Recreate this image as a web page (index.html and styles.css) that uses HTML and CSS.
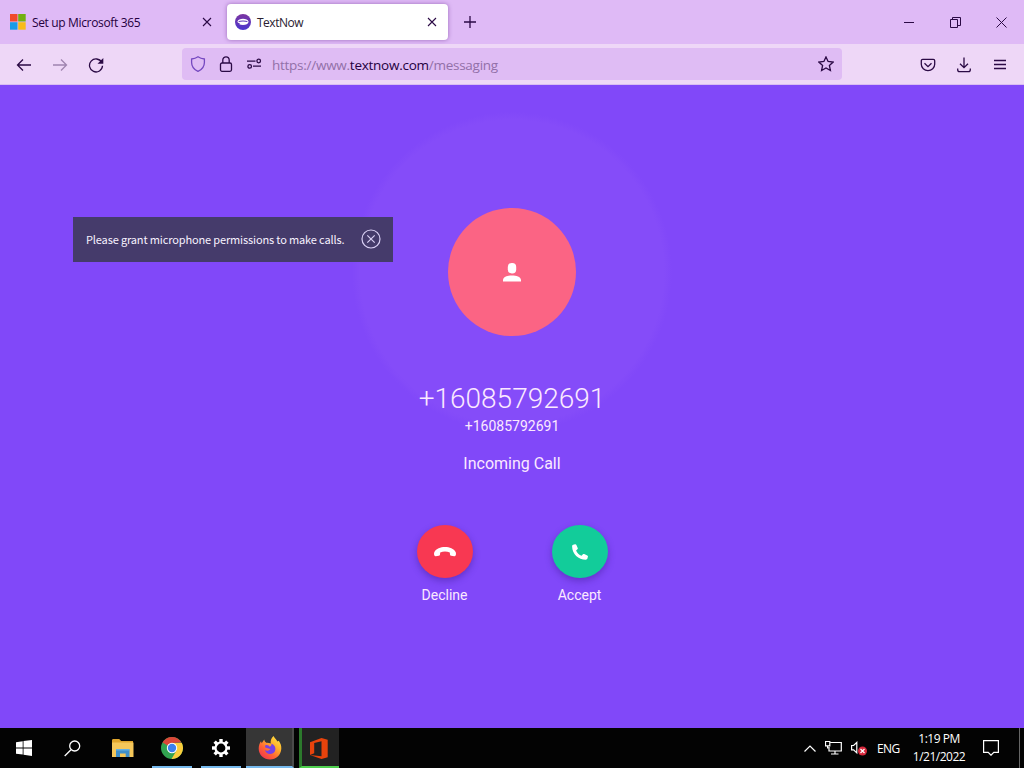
FILE: index.html
```html
<!doctype html>
<html lang="en">
<head>
    <meta charset="UTF-8">
    <meta name="viewport" content="width=device-width, initial-scale=1">
    <title>TextNow</title>
    <link rel="stylesheet" href="styles.css">
</head>
<body>
<div class="screen">
    <div class="tab-bar">
        <div class="tab">
            <svg class="favicon" width="16" height="16" viewBox="0 0 16 16">
                <path fill="#f04a2c" d="M0 0h7.500v7.500H0z"/>
                <path fill="#72b010" d="M8.200 0h7.500v7.500H8.200z"/>
                <path fill="#1a9be6" d="M0 8.200h7.500v7.500H0z"/>
                <path fill="#f8bb18" d="M8.200 8.200h7.500v7.500H8.200z"/>
            </svg>
            <span class="tab-title setup">Set up Microsoft 365</span>
            <svg class="tab-close" width="10" height="10" viewBox="0 0 10 10"><path d="M1 1l8 8M9 1L1 9"/></svg>
        </div>
        <div class="tab active">
            <svg class="favicon" width="16" height="16" viewBox="0 0 16 16">
                <defs>
                    <linearGradient id="tn" x1="0" y1="0" x2="0" y2="1">
                        <stop offset="0" stop-color="#7b35a0"/>
                        <stop offset="1" stop-color="#4b35cf"/>
                    </linearGradient>
                </defs>
                <circle cx="8" cy="8" r="8" fill="url(#tn)"/>
                <path fill="#fff" d="M2.400 7.800C3 5.600 5.400 4.800 8 4.800s5 .8 5.600 3c-.4 2.400-2.700 3.200-5.600 3.200-1.500 0-2.700-.2-3.600-.8l.4-1C3.400 9 2.700 8.500 2.400 7.800z"/>
                <path stroke="#5b35ba" stroke-width="1.100" fill="none" d="M3.600 7.600c1.400-.9 7.400-.9 8.800 0"/>
            </svg>
            <span class="tab-title now">TextNow</span>
            <svg class="tab-close" width="10" height="10" viewBox="0 0 10 10"><path d="M1 1l8 8M9 1L1 9"/></svg>
        </div>
        <svg class="new-tab" width="12" height="12" viewBox="0 0 12 12"><path d="M6 0v12M0 6h12"/></svg>
        <div class="window-buttons">
            <svg width="11" height="11" viewBox="0 0 11 11"><path d="M0 5.500h10"/></svg>
            <svg width="11" height="11" viewBox="0 0 11 11"><path d="M.5 2.500h7v8h-7zM2.500 2.500v-2h8v8h-3"/></svg>
            <svg width="11" height="11" viewBox="0 0 11 11"><path d="M.5.5l10 10M10.500.5l-10 10"/></svg>
        </div>
    </div>

    <div class="toolbar">
        <div class="nav-buttons">
            <svg width="16" height="16" viewBox="0 0 16 16"><path d="M15 8H1.500M7 2.500L1.500 8 7 13.500"/></svg>
            <svg class="disabled" width="16" height="16" viewBox="0 0 16 16"><path d="M1 8h13.500M9 2.500L14.500 8 9 13.500"/></svg>
            <svg width="16" height="16" viewBox="0 0 16 16"><path d="M13.700 5.300A6.500 6.500 0 1 0 14.500 8.800"/><path class="solid" d="M15.300 1v5.800H9.500z"/></svg>
        </div>
        <div class="url-bar">
            <svg class="shield" width="16" height="16" viewBox="0 0 16 16"><path d="M8 .8c2 1.400 4.200 2 6.400 2.200v3.400c0 4.200-2.600 7.200-6.400 9-3.800-1.800-6.400-4.800-6.400-9V3C3.800 2.800 6 2.200 8 .8z"/></svg>
            <svg width="16" height="16" viewBox="0 0 16 16"><rect x="2.500" y="7" width="11" height="8.300" rx="1.500"/><path d="M4.800 7V4a3.200 3.200 0 0 1 6.400 0v3"/></svg>
            <svg width="16" height="16" viewBox="0 0 16 16"><path d="M1 5.200h8.500M7 10.200h8"/><circle cx="12.700" cy="5" r="1.800"/><circle cx="3.700" cy="10.400" r="1.800"/></svg>
            <span class="url">https://www.<b>textnow.com</b>/messaging</span>
            <svg class="star" width="16" height="16" viewBox="0 0 16 16"><path d="M8 .9l2.100 4.600 5 .6-3.700 3.400 1 5L8 12l-4.400 2.500 1-5L.9 6.100l5-.6z"/></svg>
        </div>
        <div class="tool-buttons">
            <svg width="16" height="16" viewBox="0 0 16 16"><path d="M2.700 2.300h10.600a1.400 1.400 0 0 1 1.400 1.400v3.600a6.700 6.300 0 0 1-13.400 0V3.700a1.400 1.400 0 0 1 1.400-1.400zM4.500 6.300L8 9.600l3.500-3.300"/></svg>
            <svg width="16" height="16" viewBox="0 0 16 16"><path d="M8 .5v10M4 6.700l4 4 4-4M1.700 11.500v1.300c0 1.200.6 1.900 1.800 1.900h9c1.200 0 1.800-.7 1.800-1.900v-1.300"/></svg>
            <svg width="16" height="16" viewBox="0 0 16 16"><path d="M2 3.500h12M2 7.500h12M2 11.500h12"/></svg>
        </div>
    </div>

    <main class="page">
        <div class="call">
            <div class="avatar">
                <svg width="18" height="19" viewBox="0 0 18 19" fill="#fff">
                    <rect x="4.800" y="0" width="8.400" height="10.500" rx="4"/>
                    <path d="M0 18.500v-1.700C.6 13.800 4.600 12.500 9 12.500s8.400 1.300 9 4.300v1.700z"/>
                </svg>
            </div>
            <div class="caller">+16085792691</div>
            <div class="number">+16085792691</div>
            <div class="status">Incoming Call</div>
            <div class="actions">
                <div class="action">
                    <button class="round decline" aria-label="Decline">
                        <svg width="22" height="10" viewBox="0 0 22 10"><path fill="#fff" d="M11 0C6.300 0 2.200 1.800.4 4.900c-.5 1-.5 2.700 0 3.500.3.600.8.9 1.400.8l2.900-.5c.8-.1 1.200-.6 1.300-1.300l.2-2c3-1.200 6.600-1.200 9.600 0l.2 2c.1.700.5 1.200 1.300 1.300l2.900.5c.6.1 1.100-.2 1.400-.8.5-.8.5-2.500 0-3.500C19.800 1.800 15.700 0 11 0z"/></svg>
                    </button>
                    <span>Decline</span>
                </div>
                <div class="action">
                    <button class="round accept" aria-label="Accept">
                        <svg width="16" height="16" viewBox="0 0 16 16"><path fill="#fff" d="M1.200.8L3 .2c.6-.2 1.100.1 1.400.7l1.300 3c.2.500.1 1-.3 1.300L4.100 6.400c1 2.300 2.900 4.300 5.500 5.400l1.300-1.500c.3-.4.8-.5 1.300-.3l3.100 1.400c.5.200.8.800.6 1.400l-.5 1.700c-.2.700-.8 1.200-1.600 1.200C6.300 15.700.3 9.700.1 2.400c0-.8.4-1.400 1.100-1.600z"/></svg>
                    </button>
                    <span>Accept</span>
                </div>
            </div>
        </div>
        <div class="toast">
            <span>Please grant microphone permissions to make calls.</span>
            <svg width="20" height="20" viewBox="0 0 20 20"><circle cx="10" cy="10" r="9"/><path d="M6.300 6.300l7.400 7.400M13.700 6.300l-7.400 7.400"/></svg>
        </div>
    </main>

    <div class="taskbar">
        <div class="task start">
            <svg width="16" height="16" viewBox="0 0 16 16" fill="#fff"><path d="M0 2.200L6.700 1.300v6.200H0zM7.500 1.100L16 0v7.500H7.500zM0 8.400h6.700v6.200L0 13.700zM7.500 8.400H16V16l-8.500-1.200z"/></svg>
        </div>
        <div class="task search">
            <svg width="17" height="17" viewBox="0 0 17 17" fill="none" stroke="#fff" stroke-width="1.300"><circle cx="10.700" cy="6" r="5"/><path d="M7 9.700L.7 16"/></svg>
        </div>
        <div class="task">
            <svg width="22" height="18" viewBox="0 0 22 18"><path fill="#e0a52c" d="M0 1.500C0 .7.500 0 1.200 0h6l2 2H21v3H0z"/><path fill="#f5c75a" d="M0 3.500h21.500V18H0z"/><path fill="#3f8fca" d="M4 18v-7.500h13.500V18h-3.800v-3.500H8V18z"/><path fill="#64b0e4" d="M4 10h13.500v1.500H4z"/></svg>
        </div>
        <div class="task open">
            <svg width="22" height="22" viewBox="0 0 22 22">
                <circle cx="11" cy="11" r="11" fill="#31a350"/>
                <path fill="#db4638" d="M11 11L1.500 5.500A11 11 0 0 1 20.500 5.500L11 6z"/>
                <path fill="#fbcc3c" d="M11 6h9.800A11 11 0 0 1 10.500 22l5-8.500z"/>
                <circle cx="11" cy="11" r="5.200" fill="#fff"/>
                <circle cx="11" cy="11" r="4.200" fill="#3d80ee"/>
            </svg>
        </div>
        <div class="task open">
            <svg width="18" height="18" viewBox="-9 -9 18 18">
                <g fill="#fff">
                    <path id="tooth" d="M-1.700-9h3.400v4h-3.400z"/>
                    <use href="#tooth" transform="rotate(45)"/>
                    <use href="#tooth" transform="rotate(90)"/>
                    <use href="#tooth" transform="rotate(135)"/>
                    <use href="#tooth" transform="rotate(180)"/>
                    <use href="#tooth" transform="rotate(225)"/>
                    <use href="#tooth" transform="rotate(270)"/>
                    <use href="#tooth" transform="rotate(315)"/>
                </g>
                <circle r="5.500" fill="#000" stroke="#fff" stroke-width="2.200"/>
            </svg>
        </div>
        <div class="task open current">
            <svg width="24" height="24" viewBox="0 0 24 24">
                <defs>
                    <linearGradient id="fox" x1="1" y1="0" x2=".2" y2="1">
                        <stop offset="0" stop-color="#fff04a"/>
                        <stop offset=".4" stop-color="#ffb02a"/>
                        <stop offset=".7" stop-color="#ff6235"/>
                        <stop offset="1" stop-color="#f2334f"/>
                    </linearGradient>
                </defs>
                <path fill="url(#fox)" d="M15.500 0c1.500 2.500 3 3.500 4 5.500l1.300-.8c1.700 2.500 2.700 5 2.500 8C23 19 18 23.500 12 23.500S.7 19 .7 12.700c0-3 .9-5.700 2.300-7.500l.7 2 2.500-3.700c.3 1.500 1 2.500 2 3.200 1.600-.2 3.300.1 4.500.9C12.300 4.500 13.500 1.500 15.500 0z"/>
                <path fill="#7542e5" d="M7.500 9c2-.5 3.500.6 4.300 1.700 1-.6 2-1.600 1.700-3.200 3 1.500 4.300 3.700 3.800 6.500-.5 2.500-2.700 4-5.300 4-2.700 0-4.700-1.700-5-4 1 1 2.700 1 4 .2l1.500-1.300c-2 0-2.500-.6-3.500-.8-1-.1-1.700-.5-2-1z"/>
            </svg>
        </div>
        <div class="task open office">
            <svg width="18" height="21" viewBox="0 0 18 21"><path fill="#e8430c" fill-rule="evenodd" d="M0 4.200L11.500 0 17.700 1.700v17.500L11.500 21 0 17l11.500 1.300V3.300L4.200 5v10.300L0 17z"/></svg>
        </div>
        <div class="tray">
            <svg width="12" height="7" viewBox="0 0 12 7"><path d="M.5 6.500L6 1l5.500 5.500"/></svg>
            <svg width="17" height="14" viewBox="0 0 17 14"><path d="M5.500 1.500h10.800v8.500H4V6M10 10v3M6 13h7.500M.5.500h4.300v4.300H.5zM2.600 5v2.500"/></svg>
            <svg width="17" height="16" viewBox="0 0 17 16"><path d="M.6 5.500h2l3.200-3v10.400l-3.200-3h-2z"/><circle cx="11.500" cy="11" r="4.500" fill="#d8283c" stroke="none"/><path d="M9.500 9l4 4M13.500 9l-4 4"/></svg>
            <span class="lang">ENG</span>
            <div class="clock">
                <span>1:19 PM</span>
                <span class="date">1/21/2022</span>
            </div>
            <svg width="16" height="16" viewBox="0 0 16 16"><path d="M.6.600h14.800v11.700h-4.600L8 15.200l-2.800-2.900H.6z"/></svg>
            <div class="show-desktop"></div>
        </div>
    </div>
</div>
</body>
</html>
```
FILE: styles.css
```css
body {
    margin: 0;
    font-family: "Open Sans", "Noto Sans", sans-serif;
    overflow: hidden;
}

.screen {
    display: flex;
    flex-direction: column;
    width: 1024px;
    height: 768px;
}

svg {
    display: block;
    flex: none;
}

/* browser tabs */
.tab-bar {
    display: flex;
    align-items: center;
    height: 44px;
    background: #dfbaf6;
    color: #250040;
}

.tab-bar svg, .toolbar svg {
    fill: none;
    stroke: #2b0a45;
    stroke-width: 1.3;
}

.tab-bar .favicon {
    stroke: none;
}

.tab {
    display: flex;
    align-items: center;
    box-sizing: border-box;
    width: 222px;
    height: 36px;
    padding: 0 10px;
    font-size: 12px;
}

.tab.active {
    width: 221px;
    margin-left: 5px;
    padding: 0 11px 0 8px;
    background: #fff;
    border-radius: 4px;
    box-shadow: 0 0 4px rgba(90, 30, 130, 0.5);
    color: #2a2030;
}

.tab-title {
    margin-left: 6px;
    white-space: nowrap;
}

.setup {
    letter-spacing: -0.35px;
}

.now {
    margin-top: 1px;
    letter-spacing: -0.5px;
}

.tab .tab-close {
    margin-left: auto;
    stroke-width: 1.1;
}

.new-tab {
    margin-left: 16px;
}

.window-buttons {
    display: flex;
    gap: 35px;
    margin-left: auto;
    padding-right: 17px;
}

.window-buttons svg {
    stroke-width: 1;
}

/* navigation toolbar */
.toolbar {
    display: flex;
    align-items: center;
    box-sizing: border-box;
    height: 41px;
    padding: 1px 16px 0;
    background: #eed7f7;
    border-bottom: 1px solid #d9bdf2;
}

.nav-buttons, .tool-buttons {
    display: flex;
    gap: 20px;
}

.toolbar .disabled {
    opacity: 0.4;
}

.toolbar .solid {
    fill: #2b0a45;
    stroke: none;
}

.url-bar {
    display: flex;
    align-items: center;
    gap: 12px;
    box-sizing: border-box;
    width: 660px;
    height: 32px;
    margin: 0 0 1px 78px;
    padding: 0 8px;
    background: #dfbcf4;
    border-radius: 4px;
}

.toolbar .shield {
    stroke: #7548c0;
}

.url {
    margin: 2px 0 0 -2px;
    font-size: 13.5px;
    letter-spacing: -0.26px;
    color: #9270a8;
}

.url b {
    font-weight: normal;
    color: #250040;
}

.star {
    margin-left: auto;
}

.tool-buttons {
    margin-left: auto;
}

/* incoming call page */
.page {
    position: relative;
    height: 643px;
    background: radial-gradient(circle at 512px 187px, #854cf9 0, #854cf9 152px, #8148f9 160px);
    font-family: Roboto, sans-serif;
    color: #fbe9ff;
}

.call {
    display: flex;
    flex-direction: column;
    align-items: center;
    padding-top: 123px;
}

.avatar {
    display: flex;
    align-items: center;
    justify-content: center;
    width: 128px;
    height: 128px;
    border-radius: 50%;
    background: #fb6484;
}

.caller {
    margin-top: 46px;
    font-size: 28px;
    font-weight: 300;
    line-height: 34px;
}

.number {
    font-size: 14px;
    line-height: 20px;
}

.status {
    margin-top: 17px;
    font-size: 16px;
    line-height: 22px;
}

.actions {
    display: flex;
    gap: 79px;
    margin-top: 50px;
}

.action {
    display: flex;
    flex-direction: column;
    align-items: center;
    width: 56px;
    font-size: 14px;
    line-height: 18px;
}

.round {
    display: flex;
    align-items: center;
    justify-content: center;
    width: 56px;
    height: 53px;
    margin-bottom: 8px;
    padding: 0;
    border: none;
    border-radius: 50%;
    box-shadow: 0 3px 7px rgba(50, 20, 130, 0.4);
}

.decline {
    background: #f83852;
}

.accept {
    background: #12cc9a;
}

.toast {
    position: absolute;
    left: 73px;
    top: 132px;
    display: flex;
    align-items: center;
    justify-content: space-between;
    box-sizing: border-box;
    width: 320px;
    height: 45px;
    padding: 0 12px 1px 13px;
    background: #453b6b;
    font-family: "Noto Sans CJK JP", sans-serif;
    font-size: 11px;
    letter-spacing: -0.14px;
    color: #f7f2ff;
    white-space: nowrap;
}

.toast svg {
    fill: none;
    stroke: #d9cff4;
    stroke-width: 1.2;
}

/* windows taskbar */
.taskbar {
    display: flex;
    height: 40px;
    background: #030303;
    color: #fff;
}

.task {
    display: flex;
    align-items: center;
    justify-content: center;
    box-sizing: border-box;
    width: 40px;
    margin-right: 9px;
    border-bottom: 2px solid transparent;
    padding-top: 2px;
}

.start {
    width: 48px;
    margin-right: 0;
}

.search {
    width: 48px;
    margin-right: 7px;
}

.open {
    border-bottom-color: #76b9ed;
}

.current {
    width: 48px;
    margin: 0 5px 0 -4px;
    padding-left: 2px;
    background: #363636;
    border-right: 2px solid #4a4a4a;
}

.office {
    padding-right: 3px;
    background: #222;
    border-left: 3px solid #2c7a2c;
    border-bottom-color: #4fd04f;
}

.tray {
    display: flex;
    align-items: center;
    margin-left: auto;
    font-size: 12px;
}

.tray svg {
    fill: none;
    stroke: #fff;
    stroke-width: 1.2;
    margin-right: 9px;
}

.lang {
    width: 23px;
    letter-spacing: -0.6px;
}

.clock {
    display: flex;
    flex-direction: column;
    align-items: center;
    width: 54px;
    margin: 0 17px 0 12px;
    line-height: 18px;
    letter-spacing: -0.5px;
    white-space: nowrap;
}

.show-desktop {
    width: 4px;
    height: 40px;
    margin-left: 11px;
    border-left: 1px solid #666;
}
```
